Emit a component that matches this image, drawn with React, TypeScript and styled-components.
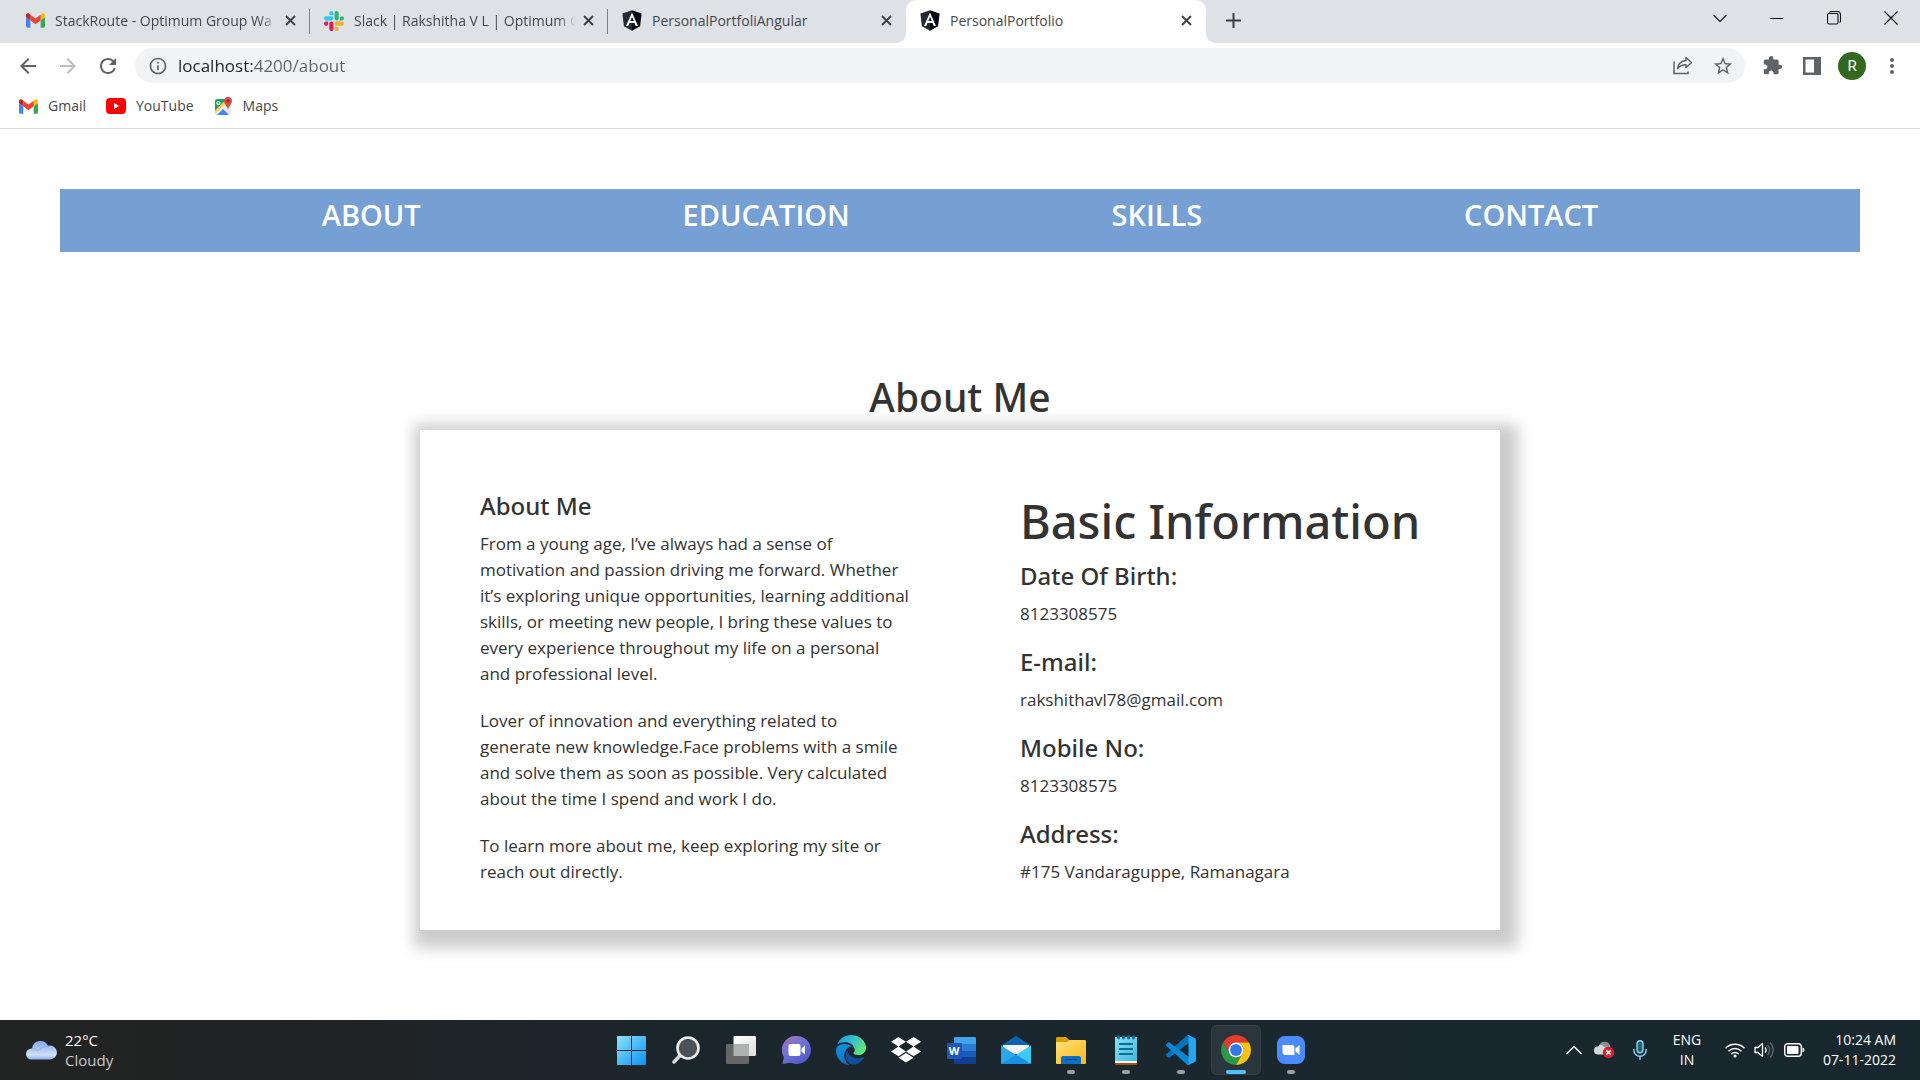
import React from "react";
import styled, { createGlobalStyle, css } from "styled-components";
import {
  MdArrowBack,
  MdArrowForward,
  MdRefresh,
  MdInfoOutline,
  MdStarBorder,
  MdExtension,
  MdMoreVert,
} from "react-icons/md";

const uiFont = `"Segoe UI", "Open Sans", "Noto Sans", sans-serif`;
const headingFont = `"Segoe UI", "Noto Sans", "Open Sans", sans-serif`;

const GlobalStyle = createGlobalStyle`
  *, *::before, *::after { box-sizing: border-box; }
  body {
    margin: 0;
    background: #fff;
    font-family: ${uiFont};
    color: #333;
  }
  button, input { font-family: inherit; }
  svg { display: block; flex: none; }
`;

/* ---------- shared ---------- */

const Window = styled.div`
  min-height: 100vh;
  display: flex;
  flex-direction: column;
`;

const plainButton = css`
  display: flex;
  align-items: center;
  justify-content: center;
  padding: 0;
  border: 0;
  background: none;
  color: inherit;
  cursor: pointer;
`;

/* ---------- browser tabs ---------- */

const TabStrip = styled.header`
  display: flex;
  height: 43px;
  padding: 0 1px 0 12px;
  background: #dee1e6;
`;

const TabList = styled.div`
  display: flex;
`;

const Tab = styled.div<{ $active?: boolean; $divider?: boolean }>`
  position: relative;
  display: flex;
  align-items: center;
  width: ${(p) => (p.$active ? 300 : 298)}px;
  padding: 0 10px 2px 14px;
  color: #45494d;
  ${(p) =>
    p.$divider &&
    css`
      &::after {
        content: "";
        position: absolute;
        right: 0;
        top: 9px;
        width: 1px;
        height: 25px;
        background: #808387;
      }
    `}
  ${(p) =>
    p.$active &&
    css`
      background: #fff;
      border-radius: 10px 10px 0 0;
      &::before,
      &::after {
        content: "";
        position: absolute;
        bottom: 0;
        width: 10px;
        height: 10px;
      }
      &::before {
        right: 100%;
        background: radial-gradient(circle at 0 0, transparent 10px, #fff 10px);
      }
      &::after {
        left: 100%;
        background: radial-gradient(circle at 100% 0, transparent 10px, #fff 10px);
      }
    `}
`;

const TabButton = styled.button<{ $fade?: boolean }>`
  ${plainButton}
  flex: 1;
  min-width: 0;
  height: 41px;
  justify-content: flex-start;
  gap: 10px;
  font-size: 14px;
  line-height: 20px;

  span {
    flex: 1;
    min-width: 0;
    text-align: left;
    white-space: nowrap;
    ${(p) =>
      p.$fade &&
      css`
        mask-image: linear-gradient(to right, #000 calc(100% - 18px), transparent);
      `}
  }
`;

const SmallButton = styled.button`
  ${plainButton}
  width: 20px;
  height: 20px;
  margin-left: 2px;
  color: #3c4043;
`;

const NewTab = styled.button`
  ${plainButton}
  width: 36px;
  height: 41px;
  margin-left: 9px;
  color: #3c4043;
`;

const WindowControls = styled.div`
  display: flex;
  margin-left: auto;
`;

const WindowButton = styled.button`
  ${plainButton}
  width: 57px;
  height: 36px;
  color: #111;
`;

/* ---------- toolbar ---------- */

const Toolbar = styled.div`
  display: flex;
  align-items: center;
  padding: 5px 8px;
  color: #5f6368;
`;

const ToolButton = styled.button<{ $muted?: boolean }>`
  ${plainButton}
  width: 40px;
  height: 35px;
  color: ${(p) => (p.$muted ? "#bcbec0" : "#5f6368")};
`;

const AddressBar = styled.div`
  flex: 1;
  display: flex;
  align-items: center;
  height: 35px;
  margin: 0 7px;
  padding: 0 2px 0 13px;
  border-radius: 18px;
  background: #f1f3f4;
`;

const AddressInput = styled.input`
  flex: 1;
  min-width: 0;
  height: 35px;
  padding: 0;
  margin-left: 10px;
  border: 0;
  outline: 0;
  font-size: 17px;
  background: linear-gradient(to right, #202124 76px, #5f6368 76px);
  background-clip: text;
  -webkit-background-clip: text;
  -webkit-text-fill-color: transparent;
`;

const Avatar = styled.span`
  display: flex;
  align-items: center;
  justify-content: center;
  width: 28px;
  height: 28px;
  border-radius: 50%;
  background: #33691e;
  color: #fff;
  font-family: Roboto, sans-serif;
  font-size: 15px;
`;

const Bookmarks = styled.nav`
  display: flex;
  gap: 20px;
  height: 41px;
  padding: 0 19px 4px;
  border-bottom: 1px solid #dadce0;
`;

const Bookmark = styled.a`
  display: flex;
  align-items: center;
  gap: 10px;
  color: #45494d;
  font-size: 14px;
  line-height: 20px;
  text-decoration: none;
`;

/* ---------- page ---------- */

const Page = styled.main`
  flex: 1;
  padding: 60px 60px 90px;
`;

const SiteNav = styled.nav`
  display: flex;
  justify-content: space-evenly;
  padding: 2px 0 13px;
  background: #769fd4;
`;

const SiteLink = styled.a`
  color: #fff;
  font-size: 29px;
  font-weight: 600;
  line-height: 48px;
  text-decoration: none;
`;

const headingType = css`
  font-family: ${headingFont};
  font-weight: 500;
`;

const Title = styled.h1`
  ${headingType}
  margin: 121px 0 9px;
  text-align: center;
  font-size: 39px;
  line-height: 48px;
`;

const Card = styled.section`
  display: grid;
  grid-template-columns: 1fr 1fr;
  width: 60%;
  min-width: 1080px;
  margin: 0 auto;
  background: #fff;
  box-shadow: 6px 6px 14px 12px #ccc;
`;

const Column = styled.div`
  padding: 61px 48px 24px 60px;
`;

const BigHeading = styled.h2`
  ${headingType}
  margin: 0 0 10px;
  font-size: 47px;
  line-height: 60px;
  white-space: nowrap;
`;

const Heading = styled.h3`
  ${headingType}
  margin: 0 0 10px;
  font-size: 24px;
  line-height: 30px;
`;

const Text = styled.p`
  margin: 0 0 21px;
  font-size: 17px;
  line-height: 26px;
`;

const Details = styled.dl`
  margin: 0;
`;

const Term = styled.dt`
  ${headingType}
  margin-bottom: 10px;
  font-size: 24px;
  line-height: 30px;
`;

const Value = styled.dd`
  margin: 0 0 20px;
  font-size: 17px;
  line-height: 26px;
`;

/* ---------- taskbar ---------- */

const Taskbar = styled.footer`
  display: grid;
  grid-template-columns: 1fr auto 1fr;
  align-items: center;
  height: 60px;
  background: linear-gradient(to right, #222423, #212223 16%, #1c262b 30%, #1a272e 60%, #18272e);
  color: #fff;
`;

const Weather = styled.button`
  ${plainButton}
  justify-self: start;
  gap: 8px;
  margin-left: 26px;
  font-size: 15px;
  line-height: 20px;
  text-align: left;
`;

const Soft = styled.span`
  display: block;
  color: #c8c9c9;
`;

const Apps = styled.div`
  display: flex;
  gap: 5px;
  padding-left: 2px;
`;

const AppButton = styled.button<{ $state?: "open" | "active" }>`
  ${plainButton}
  position: relative;
  width: 50px;
  height: 50px;
  border-radius: 6px;
  ${(p) =>
    p.$state === "active" &&
    css`
      background: #2a363c;
      box-shadow: inset 0 0 0 1px #344047;
    `}
  ${(p) =>
    p.$state &&
    css`
      &::after {
        content: "";
        position: absolute;
        bottom: 1px;
        left: 50%;
        width: ${p.$state === "active" ? 20 : 8}px;
        height: 4px;
        margin-left: ${p.$state === "active" ? -10 : -4}px;
        border-radius: 2px;
        background: ${p.$state === "active" ? "#4cc2ff" : "#9b9fa2"};
      }
    `}
`;

const Tray = styled.div`
  display: flex;
  align-items: center;
  justify-self: end;
  margin-right: 24px;
  font-size: 14px;
  line-height: 20px;
`;

const TrayButton = styled.button<{ $width: number }>`
  ${plainButton}
  width: ${(p) => p.$width}px;
  height: 50px;
`;

const Status = styled.button`
  ${plainButton}
  gap: 9px;
  width: 102px;
  height: 50px;
`;

const Lines = styled.span<{ $align: "center" | "right" }>`
  width: ${(p) => (p.$align === "right" ? 80 : 54)}px;
  text-align: ${(p) => p.$align};
  white-space: nowrap;
  span {
    display: block;
  }
`;

/* ---------- icons ---------- */

const GmailIcon = () => (
  <svg width="19" height="15" viewBox="52 42 88 66" aria-hidden="true">
    <path fill="#4285f4" d="M58 108h14V74L52 59v43c0 3.32 2.69 6 6 6" />
    <path fill="#34a853" d="M120 108h14c3.32 0 6-2.69 6-6V59l-20 15" />
    <path fill="#fbbc04" d="M120 48v26l20-15v-8c0-7.42-8.47-11.65-14.4-7.2" />
    <path fill="#ea4335" d="M72 74V48l24 18 24-18v26L96 92" />
    <path fill="#c5221f" d="M52 51v8l20 15V48l-5.6-4.2c-5.94-4.45-14.4-.22-14.4 7.2" />
  </svg>
);

const slackArm =
  "M45.2 25.8c-7.1 0-12.9-5.8-12.9-12.9S38.1 0 45.2 0s12.9 5.8 12.9 12.9v12.9H45.2zM45.2 32.3c7.1 0 12.9 5.8 12.9 12.9s-5.8 12.9-12.9 12.9H12.900C5.8 58.100 0 52.300 0 45.200s5.800-12.900 12.900-12.900h32.300z";

const SlackIcon = () => (
  <svg width="20" height="20" viewBox="0 0 122.8 122.8" aria-hidden="true">
    {["#36c5f0", "#2eb67d", "#ecb22e", "#e01e5a"].map((color, i) => (
      <path key={color} d={slackArm} fill={color} transform={`rotate(${i * 90} 61.4 61.4)`} />
    ))}
  </svg>
);

const AngularIcon = () => (
  <svg width="20" height="21" viewBox="30 28 190 204" aria-hidden="true">
    <path fill="#242a33" d="M125 30L31.900 63.200l14.200 123.100L125 230z" />
    <path fill="#050810" d="M125 30l93.100 33.200-14.200 123.100L125 230z" />
    <path
      fill="#fff"
      d="M125 52.1L66.800 182.600h21.700l11.700-29.200h49.400l11.700 29.200H183L125 52.100zm17 83.300h-34l17-40.900z"
    />
  </svg>
);

const YouTubeIcon = () => (
  <svg width="20" height="16" viewBox="0 0 20 16" aria-hidden="true">
    <rect width="20" height="16" rx="4" fill="#f00" />
    <path d="M8 5v6l5.200-3z" fill="#fff" />
  </svg>
);

const MapsIcon = () => (
  <svg width="19" height="19" viewBox="0 0 19 19" aria-hidden="true">
    <clipPath id="mapShape">
      <rect x="1" y="2" width="16" height="16" rx="2" />
    </clipPath>
    <g clipPath="url(#mapShape)">
      <rect x="1" y="2" width="16" height="16" fill="#e8eaed" />
      <path d="M1 2h14L1 16z" fill="#1ea362" />
      <path d="M1 13.500L12.500 2H16L1 17z" fill="#ffd04b" />
      <path d="M3 18l6-6 6 6z" fill="#4285f4" />
    </g>
    <path d="M6.500 5.500H4.600v1h.9a1 1 0 1 1-.3-1.100l.7-.7a2 2 0 1 0 .6 1.500z" fill="#fff" />
    <path d="M14 0a4 4 0 0 0-4 4c0 3 3 4 4 9 1-5 4-6 4-9a4 4 0 0 0-4-4z" fill="#dd4b3e" />
    <circle cx="14" cy="4" r="1.400" fill="#822f2b" />
  </svg>
);

const CloseIcon = () => (
  <svg width="11" height="11" viewBox="0 0 11 11" stroke="currentColor" strokeWidth="1.900" aria-hidden="true">
    <path d="M1 1l9 9M10 1l-9 9" />
  </svg>
);

const PlusIcon = () => (
  <svg width="15" height="15" viewBox="0 0 15 15" stroke="currentColor" strokeWidth="2" aria-hidden="true">
    <path d="M7.500 0v15M0 7.500h15" />
  </svg>
);

const lineArt = { fill: "none", stroke: "currentColor", strokeWidth: 1.1, "aria-hidden": true };

const ChevronIcon = () => (
  <svg width="14" height="9" viewBox="0 0 14 9" {...lineArt}>
    <path d="M.5 1L7 7.500 13.500 1" />
  </svg>
);
const MinimizeIcon = () => (
  <svg width="13" height="13" viewBox="0 0 13 13" {...lineArt}>
    <path d="M0 6.500h13" />
  </svg>
);
const RestoreIcon = () => (
  <svg width="14" height="14" viewBox="0 0 14 14" {...lineArt}>
    <rect x=".5" y="2.500" width="10.500" height="10.500" rx="1.500" />
    <path d="M2.500 1.500Q3 .5 4 .5h6.500a3 3 0 0 1 3 3v6.500q0 1-1 1.500" />
  </svg>
);
const WindowCloseIcon = () => (
  <svg width="14" height="14" viewBox="0 0 14 14" {...lineArt}>
    <path d="M.5.5l13 13M13.500.5l-13 13" />
  </svg>
);

const ShareIcon = () => (
  <svg width="20" height="19" viewBox="0 0 20 19" fill="none" stroke="currentColor" strokeWidth="1.500" aria-hidden="true">
    <path d="M1 5.500v12h14V15.500" />
    <path d="M13 1.500l5.500 5-5.500 5V8.700c-4 0-6.500 1-8.500 4 .5-4.500 3.500-7.700 8.500-8.200z" strokeLinejoin="round" />
  </svg>
);

const PanelIcon = () => (
  <svg width="18" height="18" viewBox="0 0 18 18" aria-hidden="true">
    <path fill="currentColor" fillRule="evenodd" d="M0 0h18v18H0zM2.500 2.500v13h8.500v-13z" />
  </svg>
);

const WeatherIcon = () => (
  <svg width="31" height="20" viewBox="0 0 31 20" aria-hidden="true">
    <defs>
      <linearGradient id="cloud" x2="0" y2="1">
        <stop stopColor="#7fa6ee" />
        <stop offset=".75" stopColor="#cfdff9" />
        <stop offset="1" stopColor="#8fb2f2" />
      </linearGradient>
    </defs>
    <path
      fill="url(#cloud)"
      d="M5.500 19.500a5.500 5.500 0 0 1 0-11h.7a8.300 8.300 0 0 1 15.800-2.700 7 7 0 1 1 1.500 13.700z"
    />
    <path fill="none" stroke="#7c9fe6" strokeWidth=".8" d="M6.500 8.500q4 0 5.500 2.500 3-4.500 10-5" opacity=".7" />
  </svg>
);

const WindowsIcon = () => (
  <svg width="29" height="29" viewBox="0 0 29 29" aria-hidden="true">
    <defs>
      <linearGradient id="win" x2="1" y2="1">
        <stop stopColor="#8be3fb" />
        <stop offset="1" stopColor="#0a92f5" />
      </linearGradient>
    </defs>
    <path
      fill="url(#win)"
      d="M1 0h13v14H0V1a1 1 0 0 1 1-1zM15 0h13a1 1 0 0 1 1 1v13H15zM0 15h14v14H1a1 1 0 0 1-1-1zM15 15h14v13a1 1 0 0 1-1 1H15z"
    />
  </svg>
);

const SearchIcon = () => (
  <svg width="28" height="28" viewBox="0 0 28 28" aria-hidden="true">
    <path d="M2 26l6.500-7" stroke="#d4d7d9" strokeWidth="3.500" strokeLinecap="round" />
    <circle cx="16" cy="12" r="10.500" fill="#4a5257" stroke="#eceeef" strokeWidth="2.600" />
  </svg>
);

const TaskViewIcon = () => (
  <svg width="30" height="28" viewBox="0 0 30 28" aria-hidden="true">
    <defs>
      <linearGradient id="tv" x2="1" y2="1">
        <stop stopColor="#fff" />
        <stop offset="1" stopColor="#dcdcdc" />
      </linearGradient>
    </defs>
    <rect x="7.500" y="0" width="22.500" height="20" rx="1" fill="url(#tv)" />
    <rect x="0" y="8" width="23" height="20" rx="1" fill="#666" />
    <path d="M7.500 8H22a1 1 0 0 1 1 1v11H7.500z" fill="#b0b1b1" />
  </svg>
);

const ChatIcon = () => (
  <svg width="29" height="28" viewBox="0 0 29 28" aria-hidden="true">
    <defs>
      <linearGradient id="chat" x1="0" y1="0" x2=".7" y2="1">
        <stop stopColor="#a673ad" />
        <stop offset=".5" stopColor="#7073d4" />
        <stop offset="1" stopColor="#5059c9" />
      </linearGradient>
    </defs>
    <path fill="url(#chat)" d="M15 0a14 14 0 1 1-6 26.700L.5 28l1.300-7A14 14 0 0 1 15 0z" />
    <rect x="6.500" y="8" width="12" height="12" rx="2" fill="#fff" />
    <path d="M19.500 12.500L23 9.500v9l-3.500-3z" fill="#fff" />
  </svg>
);

const EdgeIcon = () => (
  <svg width="30" height="30" viewBox="0 0 24 24" aria-hidden="true">
    <defs>
      <linearGradient id="edgeTop" x1="0" y1=".2" x2="1" y2=".6">
        <stop stopColor="#1f9be0" />
        <stop offset=".5" stopColor="#35c1c9" />
        <stop offset="1" stopColor="#66eb6e" />
      </linearGradient>
      <linearGradient id="edgeLeft" x2="0" y2="1">
        <stop stopColor="#1390dc" />
        <stop offset="1" stopColor="#0f70cc" />
      </linearGradient>
    </defs>
    <path
      fill="#0f4f9e"
      stroke="#0f4f9e"
      strokeWidth=".5"
      d="M21.860 17.860q.140 0 .250.120.1.130.1.250t-.110.330l-.320.460-.430.530-.440.500q-.260.250-.380.370l-.220.230q-.580.530-1.340 1.040-.760.510-1.600.910-.860.400-1.740.640t-1.670.240q-.9 0-1.690-.280-.8-.280-1.480-.780-.68-.5-1.220-1.170-.53-.66-.92-1.440-.38-.77-.58-1.600-.2-.83-.2-1.670 0-1 .32-1.960.33-.97.87-1.800.14.95.55 1.770.41.82 1.020 1.500.6.68 1.380 1.210.78.54 1.640.9.86.36 1.770.56.92.2 1.800.2 1.120 0 2.180-.24 1.060-.23 2.060-.72l.2-.1.2-.05z"
    />
    <path
      fill="url(#edgeLeft)"
      stroke="#1079d0"
      strokeWidth=".4"
      d="M6.360 16.590q0 1.100.27 2.150.27 1.060.78 2.030.51.960 1.240 1.770.74.820 1.660 1.400-1.470-.2-2.800-.74-1.330-.55-2.480-1.370-1.150-.83-2.080-1.900-.92-1.070-1.580-2.330T.36 14.940Q0 13.540 0 12.060q0-.81.32-1.490.31-.68.83-1.230.53-.55 1.200-.96.66-.4 1.350-.66.74-.27 1.500-.39.78-.12 1.550-.12.7 0 1.420.1.72.12 1.400.35.68.23 1.320.57.63.35 1.160.83-.35 0-.7.070-.33.070-.65.230v-.020q-.63.280-1.200.740-.57.460-1.050 1.040-.48.580-.87 1.260-.38.670-.65 1.390-.27.710-.42 1.440-.15.720-.15 1.380z"
    />
    <path
      fill="url(#edgeTop)"
      d="M11.960.06q1.700 0 3.330.39 1.630.38 3.070 1.150 1.430.77 2.620 1.930 1.180 1.160 1.980 2.700.49.94.76 1.960.28 1 .28 2.080 0 .89-.23 1.700-.24.8-.69 1.480-.45.68-1.100 1.220-.64.53-1.450.88-.54.24-1.110.36-.58.13-1.160.13-.42 0-.97-.03-.54-.03-1.100-.12-.55-.1-1.050-.28-.5-.19-.84-.5-.12-.09-.23-.24-.1-.16-.1-.33 0-.15.16-.35.16-.2.35-.5.2-.28.36-.68.16-.4.16-.95 0-1.060-.4-1.960-.4-.91-1.060-1.640-.66-.74-1.520-1.280-.86-.55-1.790-.89-.84-.3-1.720-.44-.87-.14-1.760-.14-1.550 0-3.060.45T.94 7.550q.71-1.740 1.810-3.130 1.100-1.380 2.520-2.350Q6.680 1.100 8.370.58q1.700-.52 3.580-.52Z"
    />
  </svg>
);

const DropboxIcon = () => (
  <svg width="30" height="26" viewBox="0 0 30 26" fill="#fff" aria-hidden="true">
    <path d="M7.500 0L15 4.800 7.500 9.600 0 4.800zM22.500 0L30 4.800l-7.500 4.800L15 4.800zM0 14.400l7.500-4.800 7.500 4.800-7.500 4.800zM22.500 9.600l7.500 4.800-7.500 4.800-7.500-4.800zM7.500 20.800L15 16l7.500 4.800L15 25.600z" />
  </svg>
);

const WordMark = styled.span`
  position: relative;
  display: block;
  width: 29px;
  height: 27px;
`;

const WordLetter = styled.span`
  position: absolute;
  left: 0;
  top: 6px;
  width: 15px;
  height: 16px;
  border-radius: 1px;
  background: #1d56b8;
  color: #fff;
  font-size: 11px;
  font-weight: 700;
  line-height: 16px;
  text-align: center;
`;

const WordIcon = () => (
  <WordMark>
    <svg width="29" height="27" viewBox="0 0 29 27" aria-hidden="true">
      <path d="M8 0h20a1 1 0 0 1 1 1v6H7V1a1 1 0 0 1 1-1z" fill="#41a5ee" />
      <path d="M7 7h22v7H7z" fill="#2b7cd3" />
      <path d="M7 14h22v6H7z" fill="#185abd" />
      <path d="M7 20h22v6a1 1 0 0 1-1 1H8a1 1 0 0 1-1-1z" fill="#103f91" />
    </svg>
    <WordLetter>W</WordLetter>
  </WordMark>
);

const MailIcon = () => (
  <svg width="30" height="28" viewBox="0 0 30 28" aria-hidden="true">
    <path d="M0 9.500L15 0l15 9.500V12H0z" fill="#0a63b0" />
    <path d="M2 9h26v9H2z" fill="#f1f1f1" />
    <path d="M0 9.500l15 9.500v9H1a1 1 0 0 1-1-1z" fill="#28a8ea" />
    <path d="M30 9.500L0 28h29a1 1 0 0 0 1-1z" fill="#3ccbf4" />
    <path d="M15 18.500L30 28H0z" fill="#1b8fe0" />
  </svg>
);

const FolderIcon = () => (
  <svg width="30" height="27" viewBox="0 0 30 27" aria-hidden="true">
    <defs>
      <linearGradient id="folder" x2="1" y2="1">
        <stop stopColor="#ffe179" />
        <stop offset="1" stopColor="#fbb81a" />
      </linearGradient>
    </defs>
    <path d="M1 0h9l4 3.500V8H0V1a1 1 0 0 1 1-1z" fill="#dd9b0b" />
    <path d="M0 5h11l2.500-2H29a1 1 0 0 1 1 1v22a1 1 0 0 1-1 1H1a1 1 0 0 1-1-1z" fill="url(#folder)" />
    <path d="M5 27v-6a2 2 0 0 1 2-2h16a2 2 0 0 1 2 2v6z" fill="#0f6fc6" />
    <path d="M9 22.500h12" stroke="#0a4a8a" strokeWidth="1.200" />
  </svg>
);

const NotepadIcon = () => (
  <svg width="22" height="30" viewBox="0 0 22 30" aria-hidden="true">
    <defs>
      <linearGradient id="note" x2="1" y2="1">
        <stop stopColor="#8ce0f3" />
        <stop offset="1" stopColor="#41b7dc" />
      </linearGradient>
    </defs>
    <path d="M0 24h22v5a1 1 0 0 1-1 1H1a1 1 0 0 1-1-1z" fill="#a7500f" />
    <path d="M0 24h22v4H0z" fill="#f4f4f4" />
    <path d="M0 2h22v23a1 1 0 0 1-1 1H1a1 1 0 0 1-1-1z" fill="url(#note)" />
    <path
      d="M3.500 1.500v1.500M8.500 1.500v1.500M13.500 1.500v1.500M18.500 1.500v1.500"
      stroke="#0b6c8e"
      strokeWidth="2.800"
      strokeLinecap="round"
    />
    <path d="M4 9h14M4 14h14M4 19h14" stroke="#0b6d90" strokeWidth="1.800" />
  </svg>
);

const CodeIcon = () => (
  <svg width="30" height="30" viewBox="0 0 100 100" aria-hidden="true">
    <path
      fill="#0074bd"
      d="M96.500 10.800L75.900.9c-2.400-1.200-5.200-.7-7.100 1.200L1.300 63.600c-1.800 1.700-1.800 4.500 0 6.200l5.500 5c1.500 1.400 3.700 1.500 5.300.2L93.400 13.300c2.700-2.100 6.600-.1 6.600 3.300v-.2c0-2.400-1.400-4.600-3.500-5.600z"
    />
    <path
      fill="#0a86d6"
      d="M96.500 89.200l-20.600 9.900c-2.400 1.200-5.200.7-7.100-1.200L1.300 36.400c-1.800-1.700-1.800-4.500 0-6.200l5.500-5c1.500-1.400 3.700-1.500 5.300-.2l81.300 61.700c2.700 2.100 6.600.1 6.600-3.300v.2c0 2.400-1.400 4.600-3.500 5.600z"
    />
    <path
      fill="#27a4f2"
      d="M75.900 99.100c-2.400 1.200-5.200.7-7.100-1.200 2.300 2.300 6.200.7 6.200-2.600V4.700c0-3.300-3.900-4.900-6.200-2.600 1.900-1.900 4.700-2.400 7.100-1.200l20.600 9.900c2.200 1 3.500 3.200 3.500 5.600v67.200c0 2.400-1.400 4.600-3.500 5.600z"
    />
  </svg>
);

const ChromeIcon = () => (
  <svg width="30" height="30" viewBox="0 0 48 48" aria-hidden="true">
    <path fill="#e33b2e" d="M24 12h20.784A24 24 0 0 0 3.216 12l10.392 18A12 12 0 0 1 24 12z" />
    <path fill="#2a9947" d="M13.608 30L3.216 12A24 24 0 0 0 24 48l10.392-18a12 12 0 0 1-20.784 0z" />
    <path fill="#fbc116" d="M34.392 30L24 48a24 24 0 0 0 20.784-36H24a12 12 0 0 1 10.392 18z" />
    <circle cx="24" cy="24" r="12" fill="#fff" />
    <circle cx="24" cy="24" r="9.500" fill="#2f78ee" />
  </svg>
);

const ZoomIcon = () => (
  <svg width="28" height="28" viewBox="0 0 28 28" aria-hidden="true">
    <rect width="28" height="28" rx="8" fill="#4a8cff" />
    <path d="M5.500 9h9a3 3 0 0 1 3 3v7h-9a3 3 0 0 1-3-3zM18.500 12.500L22.500 9v10l-4-3.500z" fill="#fff" />
  </svg>
);

const TrayArrowIcon = () => (
  <svg width="16" height="10" viewBox="0 0 16 10" fill="none" stroke="#fff" strokeWidth="1.300" aria-hidden="true">
    <path d="M.5 9L8 1.500 15.500 9" />
  </svg>
);

const OneDriveIcon = () => (
  <svg width="21" height="18" viewBox="0 0 21 18" aria-hidden="true">
    <path d="M5 4.500A6 6 0 0 1 16 4l1 5H6z" fill="#8b9093" />
    <path d="M4 13.500a4 4 0 0 1 0-8Q7 2.500 10.500 6l5 3.500v4z" fill="#d5d7d8" />
    <circle cx="14.500" cy="11.500" r="5.700" fill="#d8202f" />
    <path d="M12.400 9.400l4.200 4.200M16.600 9.400l-4.200 4.200" stroke="#fff" strokeWidth="1.500" />
  </svg>
);

const MicIcon = () => (
  <svg width="14" height="20" viewBox="0 0 14 20" fill="none" stroke="#80d8f2" strokeWidth="1.400" aria-hidden="true">
    <rect x="4" y=".7" width="6" height="12" rx="3" fill="#2b5f70" />
    <path d="M.8 9v1a6.200 6.200 0 0 0 12.400 0V9M7 16.200V20" />
  </svg>
);

const WifiIcon = () => (
  <svg width="20" height="15" viewBox="0 0 20 15" fill="none" stroke="#fff" strokeWidth="1.400" aria-hidden="true">
    <path d="M.6 5.200a13.200 13.200 0 0 1 18.800 0M3.500 8.200a9.200 9.200 0 0 1 13 0M6.300 11a5.200 5.200 0 0 1 7.400 0" />
    <circle cx="10" cy="13" r="1.600" fill="#fff" stroke="none" />
  </svg>
);

const VolumeIcon = () => (
  <svg width="21" height="18" viewBox="0 0 21 18" fill="none" stroke="#fff" strokeWidth="1.300" aria-hidden="true">
    <path d="M1 6.500h3L8.500 2.500v13L4 11.500H1z" strokeLinejoin="round" />
    <path d="M11 6.500a3.700 3.700 0 0 1 0 5" />
    <path d="M13.500 4a7 7 0 0 1 0 10M16 1.500a10.500 10.500 0 0 1 0 15" stroke="#5d686d" />
  </svg>
);

const BatteryIcon = () => (
  <svg width="21" height="14" viewBox="0 0 21 14" aria-hidden="true">
    <rect x=".7" y=".7" width="16.600" height="12.600" rx="3" fill="none" stroke="#fff" strokeWidth="1.400" />
    <rect x="3" y="3" width="11.500" height="8" rx="1" fill="#fff" />
    <path d="M18.500 4.500q2 .3 2 2.500t-2 2.500z" fill="#fff" />
  </svg>
);

/* ---------- content ---------- */

const tabs = [
  { title: "StackRoute - Optimum Group Wa", icon: <GmailIcon />, divider: true, fade: true },
  { title: "Slack | Rakshitha V L | Optimum G", icon: <SlackIcon />, divider: true, fade: true },
  { title: "PersonalPortfoliAngular", icon: <AngularIcon /> },
  { title: "PersonalPortfolio", icon: <AngularIcon />, active: true },
];

const bookmarks = [
  { title: "Gmail", icon: <GmailIcon /> },
  { title: "YouTube", icon: <YouTubeIcon /> },
  { title: "Maps", icon: <MapsIcon /> },
];

const windowControls = [
  { label: "Search tabs", icon: <ChevronIcon /> },
  { label: "Minimize", icon: <MinimizeIcon /> },
  { label: "Restore", icon: <RestoreIcon /> },
  { label: "Close", icon: <WindowCloseIcon /> },
];

const sections = ["About", "Education", "Skills", "Contact"];

const story = [
  "From a young age, I’ve always had a sense of motivation and passion driving me forward. Whether it’s exploring unique opportunities, learning additional skills, or meeting new people, I bring these values to every experience throughout my life on a personal and professional level.",
  "Lover of innovation and everything related to generate new knowledge.Face problems with a smile and solve them as soon as possible. Very calculated about the time I spend and work I do.",
  "To learn more about me, keep exploring my site or reach out directly.",
];

const details = [
  ["Date Of Birth:", "8123308575"],
  ["E-mail:", "rakshithavl78@gmail.com"],
  ["Mobile No:", "8123308575"],
  ["Address:", "#175 Vandaraguppe, Ramanagara"],
];

const apps: { name: string; icon: React.ReactNode; state?: "open" | "active" }[] = [
  { name: "Start", icon: <WindowsIcon /> },
  { name: "Search", icon: <SearchIcon /> },
  { name: "Task view", icon: <TaskViewIcon /> },
  { name: "Chat", icon: <ChatIcon /> },
  { name: "Edge", icon: <EdgeIcon /> },
  { name: "Dropbox", icon: <DropboxIcon /> },
  { name: "Word", icon: <WordIcon /> },
  { name: "Mail", icon: <MailIcon /> },
  { name: "File Explorer", icon: <FolderIcon />, state: "open" },
  { name: "Notepad", icon: <NotepadIcon />, state: "open" },
  { name: "Visual Studio Code", icon: <CodeIcon />, state: "open" },
  { name: "Chrome", icon: <ChromeIcon />, state: "active" },
  { name: "Zoom", icon: <ZoomIcon />, state: "open" },
];

export default function App() {
  return (
    <Window>
      <GlobalStyle />

      <TabStrip>
        <TabList>
          {tabs.map((tab) => (
            <Tab key={tab.title} $active={tab.active} $divider={tab.divider}>
              <TabButton $fade={tab.fade}>
                {tab.icon}
                <span>{tab.title}</span>
              </TabButton>
              <SmallButton aria-label="Close tab">
                <CloseIcon />
              </SmallButton>
            </Tab>
          ))}
        </TabList>
        <NewTab aria-label="New tab">
          <PlusIcon />
        </NewTab>
        <WindowControls>
          {windowControls.map((control) => (
            <WindowButton key={control.label} aria-label={control.label}>
              {control.icon}
            </WindowButton>
          ))}
        </WindowControls>
      </TabStrip>

      <Toolbar>
        <ToolButton aria-label="Back">
          <MdArrowBack size={24} />
        </ToolButton>
        <ToolButton aria-label="Forward" $muted>
          <MdArrowForward size={24} />
        </ToolButton>
        <ToolButton aria-label="Reload">
          <MdRefresh size={24} />
        </ToolButton>
        <AddressBar>
          <MdInfoOutline size={20} />
          <AddressInput aria-label="Address" defaultValue="localhost:4200/about" />
          <ToolButton aria-label="Share">
            <ShareIcon />
          </ToolButton>
          <ToolButton aria-label="Bookmark this page">
            <MdStarBorder size={22} />
          </ToolButton>
        </AddressBar>
        <ToolButton aria-label="Extensions">
          <MdExtension size={21} />
        </ToolButton>
        <ToolButton aria-label="Side panel">
          <PanelIcon />
        </ToolButton>
        <ToolButton aria-label="Profile">
          <Avatar>R</Avatar>
        </ToolButton>
        <ToolButton aria-label="Menu">
          <MdMoreVert size={24} />
        </ToolButton>
      </Toolbar>

      <Bookmarks aria-label="Bookmarks">
        {bookmarks.map((bookmark) => (
          <Bookmark key={bookmark.title} href="#">
            {bookmark.icon}
            {bookmark.title}
          </Bookmark>
        ))}
      </Bookmarks>

      <Page>
        <SiteNav aria-label="Site">
          {sections.map((section) => (
            <SiteLink key={section} href={`#${section.toLowerCase()}`}>
              {section.toUpperCase()}
            </SiteLink>
          ))}
        </SiteNav>
        <Title>About Me</Title>
        <Card>
          <Column>
            <Heading>About Me</Heading>
            {story.map((paragraph) => (
              <Text key={paragraph}>{paragraph}</Text>
            ))}
          </Column>
          <Column>
            <BigHeading>Basic Information</BigHeading>
            <Details>
              {details.map(([term, value]) => (
                <React.Fragment key={term}>
                  <Term>{term}</Term>
                  <Value>{value}</Value>
                </React.Fragment>
              ))}
            </Details>
          </Column>
        </Card>
      </Page>

      <Taskbar>
        <Weather>
          <WeatherIcon />
          <span>
            22°C
            <Soft>Cloudy</Soft>
          </span>
        </Weather>
        <Apps>
          {apps.map((app) => (
            <AppButton key={app.name} aria-label={app.name} $state={app.state}>
              {app.icon}
            </AppButton>
          ))}
        </Apps>
        <Tray>
          <TrayButton $width={30} aria-label="Show hidden icons">
            <TrayArrowIcon />
          </TrayButton>
          <TrayButton $width={30} aria-label="OneDrive">
            <OneDriveIcon />
          </TrayButton>
          <TrayButton $width={41} aria-label="Microphone">
            <MicIcon />
          </TrayButton>
          <Lines $align="center">
            <span>ENG</span>
            <span>IN</span>
          </Lines>
          <Status aria-label="Network, volume and battery">
            <WifiIcon />
            <VolumeIcon />
            <BatteryIcon />
          </Status>
          <Lines $align="right">
            <span>10:24 AM</span>
            <span>07-11-2022</span>
          </Lines>
        </Tray>
      </Taskbar>
    </Window>
  );
}
